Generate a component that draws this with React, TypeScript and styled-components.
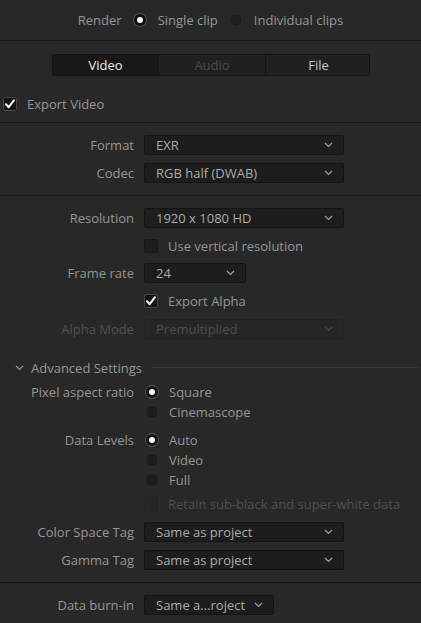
import React from "react";
import styled, { createGlobalStyle, css } from "styled-components";

const Global = createGlobalStyle`
  html, body { margin: 0; padding: 0; background: #282828; }
  body { font-family: "Open Sans", "Noto Sans", sans-serif; font-size: 13px; color: #969696; }
  * { box-sizing: border-box; }
`;

const Page = styled.div`
  width: 421px;
  height: 623px;
  background: #282828;
  display: flex;
  flex-direction: column;
  overflow: hidden;
`;

const TopBar = styled.div`
  height: 41px;
  border-bottom: 1px solid #171717;
  display: flex;
  align-items: center;
  justify-content: center;
  gap: 11px;
`;

const Text = styled.span<{ $tone?: "dim" | "normal" | "bright" }>`
  white-space: nowrap;
  color: ${(p) => (p.$tone === "dim" ? "#4f4f4f" : p.$tone === "bright" ? "#d0d0d0" : "#969696")};
`;

const RadioCircle = styled.span<{ $on?: boolean }>`
  width: 14px;
  height: 14px;
  border-radius: 50%;
  flex: none;
  display: inline-flex;
  align-items: center;
  justify-content: center;
  ${(p) =>
    p.$on
      ? css`
          background: #121212;
          border: 1px solid #555;
          &::after {
            content: "";
            width: 6px;
            height: 6px;
            border-radius: 50%;
            background: #f4f4f4;
          }
        `
      : css`
          background: #1e1e1e;
          border: 1px solid #2e2e2e;
        `}
`;

const Tabs = styled.div`
  margin: 13px 0 0 52px;
  width: 318px;
  height: 22px;
  display: grid;
  grid-template-columns: 105px 107px 106px;
  border: 1px solid #141414;
  border-radius: 2px;
  overflow: hidden;
`;

const Tab = styled.div<{ $state: "active" | "off" | "normal" }>`
  display: flex;
  align-items: center;
  justify-content: center;
  background: ${(p) => (p.$state === "active" ? "#181818" : "#202020")};
  color: ${(p) => (p.$state === "active" ? "#ececec" : p.$state === "off" ? "#4a4a4a" : "#c8c8c8")};
  & + & { border-left: 1px solid #141414; }
`;

const ExportRow = styled.div`
  height: 28px;
  margin-top: 14px;
  margin-bottom: 4px;
  padding-left: 3px;
  display: flex;
  align-items: center;
  gap: 10px;
`;

const Divider = styled.div`
  height: 1px;
  background: #171717;
  flex: none;
`;

const Section = styled.div<{ $bottom?: number }>`
  padding: 8px 0 ${(p) => p.$bottom ?? 8}px;
  display: flex;
  flex-direction: column;
`;

const Row = styled.div<{ $h?: number }>`
  display: grid;
  grid-template-columns: 134px 1fr;
  column-gap: 10px;
  align-items: center;
  height: ${(p) => p.$h ?? 28}px;
`;

const Label = styled.span<{ $disabled?: boolean }>`
  text-align: right;
  white-space: nowrap;
  color: ${(p) => (p.$disabled ? "#505050" : "#969696")};
`;

const Select = styled.div<{ $w?: number; $disabled?: boolean }>`
  width: ${(p) => p.$w ?? 200}px;
  height: 20px;
  display: flex;
  align-items: center;
  justify-content: space-between;
  padding: 0 10px 0 11px;
  border-radius: 2px;
  border: 1px solid ${(p) => (p.$disabled ? "#222" : "#141414")};
  background: ${(p) => (p.$disabled ? "#262626" : "#1d1d1d")};
  color: ${(p) => (p.$disabled ? "#4d4d4d" : "#ababab")};
  white-space: nowrap;
`;

const Check = styled.span<{ $on?: boolean; $disabled?: boolean }>`
  width: 14px;
  height: 14px;
  flex: none;
  border-radius: 2px;
  display: inline-flex;
  align-items: center;
  justify-content: center;
  background: ${(p) => (p.$disabled ? "#262626" : p.$on ? "#141414" : "#1e1e1e")};
  border: 1px solid ${(p) => (p.$disabled ? "#222" : p.$on ? "#474747" : "#181818")};
`;

const Inline = styled.div`
  display: flex;
  align-items: center;
  gap: 10px;
`;

const RadioOption = styled.div`
  display: flex;
  align-items: center;
  gap: 10px;
  padding-left: 1px;
`;

const AdvHeader = styled.div`
  height: 24px;
  margin-top: 13px;
  margin-bottom: 2px;
  display: flex;
  align-items: center;
  padding-left: 15px;
  gap: 7px;
`;

const AdvLine = styled.div`
  flex: 1;
  height: 1px;
  background: #3a3a3a;
  margin: 0 3px 1px 3px;
`;

const GroupGap = styled.div`
  height: 8px;
`;

const Chevron = ({ color = "#a0a0a0" }: { color?: string }) => (
  <svg width="9" height="6" viewBox="0 0 9 6" style={{ flex: "none" }}>
    <path d="M1 1 L4.5 4.5 L8 1" stroke={color} strokeWidth="1.2" fill="none" />
  </svg>
);

const Tick = () => (
  <svg width="12" height="12" viewBox="0 0 12 12">
    <path d="M2 6.3 L4.7 9.2 L10 2.2" stroke="#f5f5f5" strokeWidth="2" fill="none" strokeLinecap="round" strokeLinejoin="round" />
  </svg>
);

const Dropdown = ({ value, w, disabled }: { value: string; w?: number; disabled?: boolean }) => (
  <Select $w={w} $disabled={disabled}>
    <span>{value}</span>
    <Chevron color={disabled ? "#454545" : "#a0a0a0"} />
  </Select>
);

export default function App() {
  return (
    <Page>
      <Global />
      <TopBar>
        <Text>Render</Text>
        <RadioCircle $on />
        <Text>Single clip</Text>
        <RadioCircle />
        <Text>Individual clips</Text>
      </TopBar>

      <Tabs>
        <Tab $state="active">Video</Tab>
        <Tab $state="off">Audio</Tab>
        <Tab $state="normal">File</Tab>
      </Tabs>

      <ExportRow>
        <Check $on><Tick /></Check>
        <Text>Export Video</Text>
      </ExportRow>

      <Divider />

      <Section>
        <Row>
          <Label>Format</Label>
          <Dropdown value="EXR" />
        </Row>
        <Row>
          <Label>Codec</Label>
          <Dropdown value="RGB half (DWAB)" />
        </Row>
      </Section>

      <Divider />

      <Section>
        <Row>
          <Label>Resolution</Label>
          <Dropdown value="1920 x 1080 HD" />
        </Row>
        <Row $h={27}>
          <span />
          <Inline>
            <Check />
            <Text>Use vertical resolution</Text>
          </Inline>
        </Row>
        <Row>
          <Label>Frame rate</Label>
          <Dropdown value="24" w={102} />
        </Row>
        <Row>
          <span />
          <Inline>
            <Check $on><Tick /></Check>
            <Text>Export Alpha</Text>
          </Inline>
        </Row>
        <Row>
          <Label $disabled>Alpha Mode</Label>
          <Dropdown value="Premultiplied" disabled />
        </Row>

        <AdvHeader>
          <Chevron color="#969696" />
          <Text>Advanced Settings</Text>
          <AdvLine />
        </AdvHeader>

        <Row $h={20}>
          <Label>Pixel aspect ratio</Label>
          <RadioOption><RadioCircle $on /><Text>Square</Text></RadioOption>
        </Row>
        <Row $h={20}>
          <span />
          <RadioOption><RadioCircle /><Text>Cinemascope</Text></RadioOption>
        </Row>
        <GroupGap />
        <Row $h={20}>
          <Label>Data Levels</Label>
          <RadioOption><RadioCircle $on /><Text>Auto</Text></RadioOption>
        </Row>
        <Row $h={20}>
          <span />
          <RadioOption><RadioCircle /><Text>Video</Text></RadioOption>
        </Row>
        <Row $h={20}>
          <span />
          <RadioOption><RadioCircle /><Text>Full</Text></RadioOption>
        </Row>
        <Row>
          <span />
          <Inline>
            <Check $disabled />
            <Text $tone="dim">Retain sub-black and super-white data</Text>
          </Inline>
        </Row>
        <Row>
          <Label>Color Space Tag</Label>
          <Dropdown value="Same as project" />
        </Row>
        <Row>
          <Label>Gamma Tag</Label>
          <Dropdown value="Same as project" />
        </Row>
      </Section>

      <Divider />

      <Section $bottom={0}>
        <Row>
          <Label>Data burn-in</Label>
          <Dropdown value="Same a...roject" w={130} />
        </Row>
      </Section>
    </Page>
  );
}
